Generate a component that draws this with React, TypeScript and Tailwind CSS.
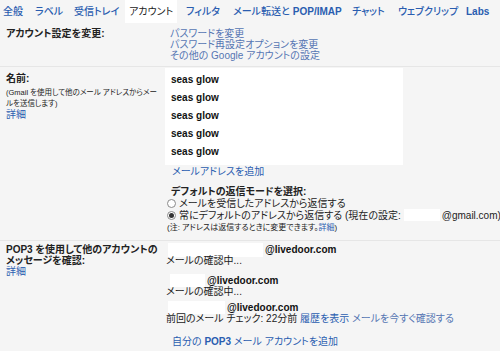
import React from 'react';

const tabs = [
  { label: '全般', w: 'w-[32px]' },
  { label: 'ラベル', w: 'w-[39px]' },
  { label: '受信トレイ', w: 'w-[56px]' },
  { label: 'アカウント', w: 'w-[56px]', active: true },
  { label: 'フィルタ', w: 'w-[47px]' },
  { label: 'メール転送と', latin: 'POP/IMAP', w: 'w-[119px]' },
  { label: 'チャット', w: 'w-[46px]' },
  { label: 'ウェブクリップ', w: 'w-[68px]' },
  { label: '', latin: 'Labs', w: 'w-[30px]' },
];

const names = ['seas glow', 'seas glow', 'seas glow', 'seas glow', 'seas glow'];

function Radio({ checked }: { checked?: boolean }) {
  return (
    <span className="mr-[3px] inline-flex h-[9px] w-[9px] shrink-0 items-center justify-center rounded-full border border-[#8a8a8a] bg-white">
      {checked ? <span className="h-[5px] w-[5px] rounded-full bg-[#333]" /> : null}
    </span>
  );
}

export default function App() {
  return (
    <div className="h-[351px] w-[500px] overflow-hidden whitespace-nowrap bg-[#f5f5f5] font-['Liberation_Sans','Noto_Sans_CJK_JP',sans-serif] text-[10px] leading-[11px] text-[#222] [font-feature-settings:'palt']">
      {/* tabs */}
      <div className="flex h-[23px] items-stretch pl-[3px]">
        {tabs.map((tab, i) =>
          tab.active ? (
            <div key={i} className={`${tab.w} flex shrink-0`}>
              <span className="-ml-[5px] flex items-center bg-white px-[4px] text-[#222]">{tab.label}</span>
            </div>
          ) : (
            <div key={i} className={`${tab.w} flex shrink-0 items-center font-medium text-[#2a5db0]`}>
              {tab.label}
              {tab.latin ? <span className={`font-bold ${tab.label ? 'ml-[3px]' : ''}`}>{tab.latin}</span> : null}
            </div>
          ),
        )}
      </div>

      {/* account settings */}
      <div className="grid grid-cols-[165px_1fr] border-b border-[#e6e6e6] pb-[5px] pt-[5px]">
        <div className="pl-[6px] font-bold">アカウント設定を変更:</div>
        <div className="flex flex-col pl-[5px] text-[#5676b3]">
          <span>パスワードを変更</span>
          <span>パスワード再設定オプションを変更</span>
          <span>その他の Google アカウントの設定</span>
        </div>
      </div>

      {/* names */}
      <div className="grid grid-cols-[165px_1fr] border-b border-[#e6e6e6] pb-[6px]">
        <div className="pl-[6px] pt-[6px]">
          <div className="font-bold">名前:</div>
          <div className="mt-[3px] text-[7.5px] leading-[11px]">
            (Gmail を使用して他のメール アドレスからメー
            <br />
            ルを送信します)
          </div>
          <div className="text-[#2a5db0]">詳細</div>
        </div>
        <div className="pt-[1px]">
          <div className="w-[238px] bg-white pb-[5px] pt-[2px]">
            {names.map((n, i) => (
              <div key={i} className="flex h-[18px] items-center pl-[6px] font-bold text-[#111]">
                {n}
              </div>
            ))}
          </div>
          <div className="mt-[1px] flex h-[11px] items-center pl-[7px] text-[#2a5db0]">メールアドレスを追加</div>
          <div className="mt-[9px] pl-[6px] font-bold">デフォルトの返信モードを選択:</div>
          <div className="flex h-[12px] items-center pl-[2px]">
            <Radio />
            <span>メールを受信したアドレスから返信する</span>
          </div>
          <div className="flex h-[12px] items-center pl-[2px]">
            <Radio checked />
            <span>常にデフォルトのアドレスから返信する (現在の設定:</span>
            <span className="ml-[3px] inline-block h-[12px] w-[36px] bg-white" />
            <span className="ml-[2px]">@gmail.com)</span>
          </div>
          <div className="mt-[1px] pl-[2px] text-[8px] leading-[12px]">
            (注: アドレスは返信するときに変更できます。<span className="text-[#2a5db0]">詳細</span>)
          </div>
        </div>
      </div>

      {/* POP3 */}
      <div className="grid grid-cols-[165px_1fr] pt-[3px]">
        <div className="pl-[6px]">
          <div className="font-bold">POP3 を使用して他のアカウントの</div>
          <div className="font-bold">メッセージを確認:</div>
          <div className="text-[#2a5db0]">詳細</div>
        </div>
        <div className="flex flex-col">
          <div className="flex h-[11px] items-center">
            <span className="ml-[3px] inline-block h-[14px] w-[95px] bg-white" />
            <span className="ml-[2px] font-bold text-[#111]">@livedoor.com</span>
          </div>
          <div className="h-[11px] pl-[1px]">メールの確認中...</div>
          <div className="mt-[9px] flex h-[11px] items-center">
            <span className="ml-[5px] inline-block h-[13px] w-[35px] bg-white" />
            <span className="ml-[2px] font-bold text-[#111]">@livedoor.com</span>
          </div>
          <div className="h-[11px] pl-[1px]">メールの確認中...</div>
          <div className="mt-[5px] flex h-[11px] items-center">
            <span className="ml-[3px] inline-block h-[13px] w-[57px] bg-white" />
            <span className="ml-[2px] font-bold text-[#111]">@livedoor.com</span>
          </div>
          <div className="h-[12px] pl-[1px]">
            前回のメール チェック: 22分前 <span className="text-[#2a5db0]">履歴を表示</span>{' '}
            <span className="text-[#5676b3]">メールを今すぐ確認する</span>
          </div>
          <div className="mt-[11px] pl-[7px] text-[#2a5db0]">
            自分の <span className="font-bold">POP3</span> メール アカウントを追加
          </div>
        </div>
      </div>
    </div>
  );
}
